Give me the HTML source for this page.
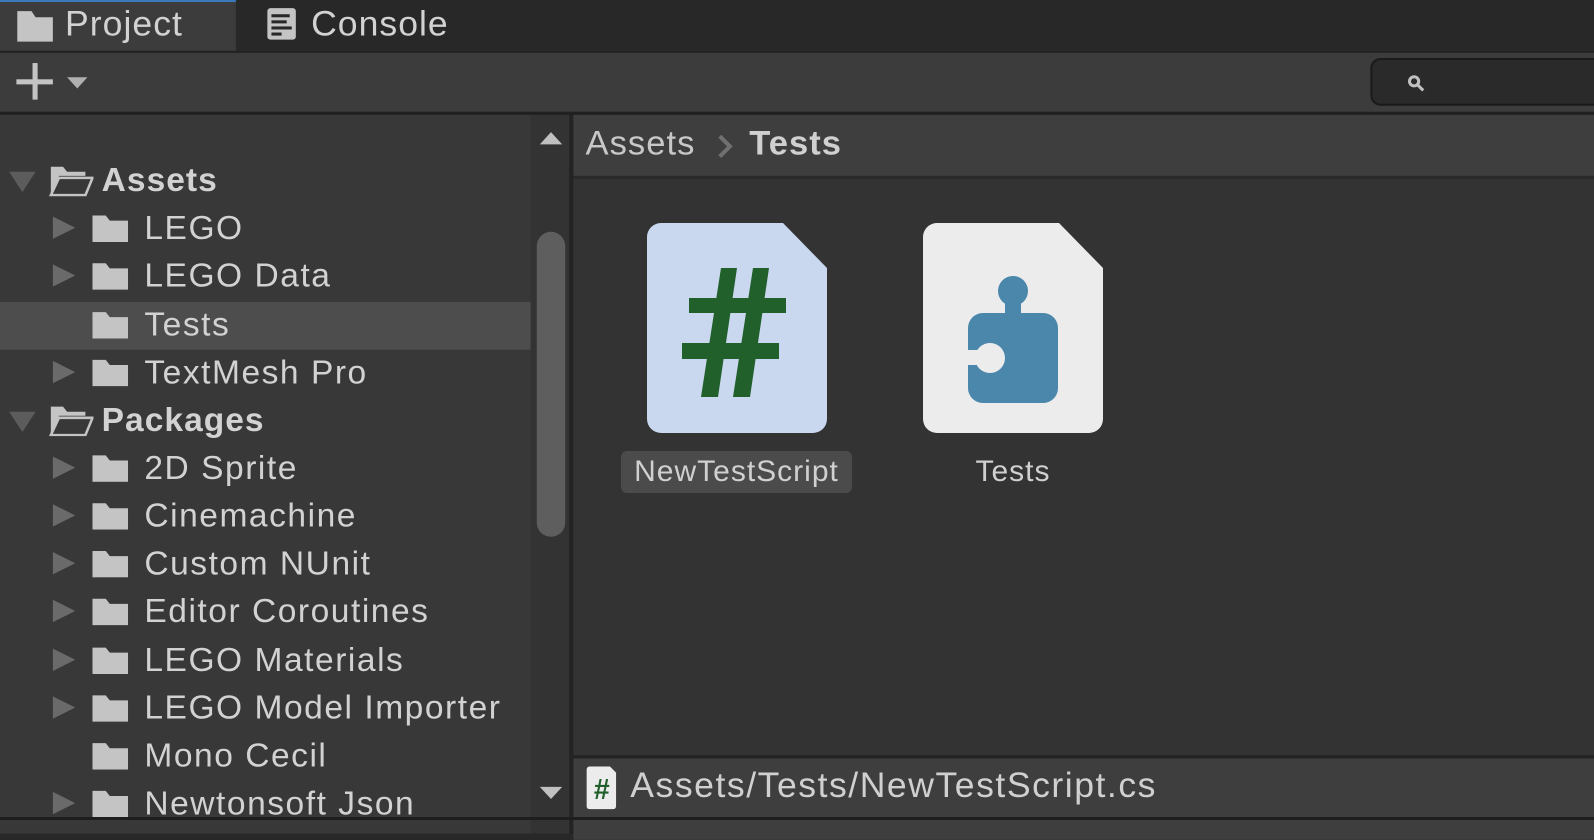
<!DOCTYPE html>
<html><head><style>
*{margin:0;padding:0;box-sizing:border-box}
body{width:1594px;height:820px;background:#282828;font-family:"Liberation Sans",sans-serif;color:#d2d2d2;position:relative;overflow:hidden}
#w{position:absolute;left:0;top:0;width:1568px;height:807px;transform:scale(1.0166);transform-origin:0 0}
.abs{position:absolute}
.row{position:absolute;left:0;width:522px;height:47px;font-size:33px;line-height:47px;letter-spacing:1.5px}
.row .t{position:absolute;left:142px}
.row .tri{position:absolute;left:52px;top:13px;width:0;height:0;border-top:11px solid transparent;border-bottom:11px solid transparent;border-left:22px solid #6a6a6a}
.fold{position:absolute;left:90px;top:11px;width:36px;height:27px}
.b{font-weight:bold}
</style></head><body>
<div id="w">
<div class="abs" style="left:0;top:0;width:232px;height:50px;background:#3c3c3c;border-top:2px solid #3a79bb"></div>
<svg class="abs" style="left:16px;top:10px" width="38" height="32"><path d="M1 1h14l4 6h17v24H1z" fill="#c4c4c4"/></svg>
<div class="abs" style="left:64px;top:4px;font-size:35px;letter-spacing:1px">Project</div>
<svg class="abs" style="left:262px;top:7px" width="30" height="33"><rect x="1" y="1" width="28" height="31" rx="3" fill="#c4c4c4"/><g fill="#282828"><rect x="5" y="7" width="18" height="3"/><rect x="5" y="13" width="15" height="3"/><rect x="5" y="19" width="20" height="3"/><rect x="5" y="25" width="10" height="3"/></g></svg>
<div class="abs" style="left:306px;top:4px;font-size:35px;letter-spacing:1px">Console</div>
<div class="abs" style="left:0;top:50px;width:1594px;height:60px;background:#3c3c3c;border-top:2px solid #222"></div>
<div class="abs" style="left:0;top:110px;width:1594px;height:3px;background:#202020"></div>
<svg class="abs" style="left:16px;top:62px" width="70" height="38"><rect x="0" y="16" width="36" height="5" fill="#c4c4c4"/><rect x="16" y="0" width="5" height="36" fill="#c4c4c4"/><path d="M50 14h20l-10 11z" fill="#b0b0b0"/></svg>
<div class="abs" style="left:1348px;top:57px;width:260px;height:47px;background:#2a2a2a;border:2px solid #1a1a1a;border-radius:10px"></div>
<svg class="abs" style="left:1384px;top:73px" width="22" height="22"><circle cx="7" cy="7" r="4.5" stroke="#c0c0c0" stroke-width="3" fill="none"/><path d="M10 10l6 6" stroke="#c0c0c0" stroke-width="3"/></svg>
<div class="abs" style="left:0;top:113px;width:522px;height:707px;background:#383838"></div>
<div class="abs" style="left:522px;top:113px;width:38px;height:707px;background:#333"></div>
<div class="abs" style="left:560px;top:113px;width:4px;height:707px;background:#232323"></div>
<div class="abs" style="left:528px;top:228px;width:28px;height:300px;background:#5e5e5e;border-radius:14px"></div>
<svg class="abs" style="left:530px;top:128px" width="24" height="16"><path d="M1 14h22L12 2z" fill="#c0c0c0"/></svg>
<svg class="abs" style="left:530px;top:772px" width="24" height="16"><path d="M1 2h22L12 14z" fill="#c0c0c0"/></svg>
<div class="abs" style="left:0;top:297px;width:522px;height:47px;background:#4d4d4d"></div>

<div class="row" style="top:153px"><svg class="abs" style="left:8px;top:14px" width="28" height="22"><path d="M1 2h26L14 22z" fill="#5c5c5c"/></svg><svg class="abs" style="left:48px;top:10px" width="44" height="30"><path d="M2 1h12l4 5h18v4H10L2 28z" fill="#c4c4c4"/><path d="M10 12h33l-7 17H2z" fill="none" stroke="#c4c4c4" stroke-width="2.5"/></svg><span class="t b" style="left:100px;letter-spacing:1px">Assets</span></div>
<div class="row" style="top:200px"><i class="tri"></i><svg class="fold"><path d="M1 1h13l4 5h18v21H1z" fill="#c4c4c4"/></svg><span class="t">LEGO</span></div>
<div class="row" style="top:247px"><i class="tri"></i><svg class="fold"><path d="M1 1h13l4 5h18v21H1z" fill="#c4c4c4"/></svg><span class="t">LEGO Data</span></div>
<div class="row" style="top:295px"><svg class="fold"><path d="M1 1h13l4 5h18v21H1z" fill="#c4c4c4"/></svg><span class="t">Tests</span></div>
<div class="row" style="top:342px"><i class="tri"></i><svg class="fold"><path d="M1 1h13l4 5h18v21H1z" fill="#c4c4c4"/></svg><span class="t">TextMesh Pro</span></div>
<div class="row" style="top:389px"><svg class="abs" style="left:8px;top:14px" width="28" height="22"><path d="M1 2h26L14 22z" fill="#5c5c5c"/></svg><svg class="abs" style="left:48px;top:10px" width="44" height="30"><path d="M2 1h12l4 5h18v4H10L2 28z" fill="#c4c4c4"/><path d="M10 12h33l-7 17H2z" fill="none" stroke="#c4c4c4" stroke-width="2.5"/></svg><span class="t b" style="left:100px;letter-spacing:1px">Packages</span></div>
<div class="row" style="top:436px"><i class="tri"></i><svg class="fold"><path d="M1 1h13l4 5h18v21H1z" fill="#c4c4c4"/></svg><span class="t">2D Sprite</span></div>
<div class="row" style="top:483px"><i class="tri"></i><svg class="fold"><path d="M1 1h13l4 5h18v21H1z" fill="#c4c4c4"/></svg><span class="t">Cinemachine</span></div>
<div class="row" style="top:530px"><i class="tri"></i><svg class="fold"><path d="M1 1h13l4 5h18v21H1z" fill="#c4c4c4"/></svg><span class="t">Custom NUnit</span></div>
<div class="row" style="top:577px"><i class="tri"></i><svg class="fold"><path d="M1 1h13l4 5h18v21H1z" fill="#c4c4c4"/></svg><span class="t">Editor Coroutines</span></div>
<div class="row" style="top:625px"><i class="tri"></i><svg class="fold"><path d="M1 1h13l4 5h18v21H1z" fill="#c4c4c4"/></svg><span class="t">LEGO Materials</span></div>
<div class="row" style="top:672px"><i class="tri"></i><svg class="fold"><path d="M1 1h13l4 5h18v21H1z" fill="#c4c4c4"/></svg><span class="t">LEGO Model Importer</span></div>
<div class="row" style="top:719px"><svg class="fold"><path d="M1 1h13l4 5h18v21H1z" fill="#c4c4c4"/></svg><span class="t">Mono Cecil</span></div>
<div class="row" style="top:766px"><i class="tri"></i><svg class="fold"><path d="M1 1h13l4 5h18v21H1z" fill="#c4c4c4"/></svg><span class="t">Newtonsoft Json</span></div>

<div class="abs" style="left:564px;top:113px;width:1030px;height:60px;background:#3e3e3e"></div>
<div class="abs" style="left:564px;top:173px;width:1030px;height:3px;background:#2a2a2a"></div>
<div class="abs" style="left:564px;top:176px;width:1030px;height:567px;background:#333"></div>
<div class="abs" style="left:576px;top:122px;font-size:34px;letter-spacing:1px;color:#c8c8c8">Assets</div>
<svg class="abs" style="left:704px;top:131px" width="18" height="26"><path d="M4 3l10 10L4 23" stroke="#707070" stroke-width="4" fill="none"/></svg>
<div class="abs b" style="left:737px;top:122px;font-size:34px;letter-spacing:1px;color:#d0d0d0">Tests</div>

<div class="abs" style="left:564px;top:743px;width:1030px;height:3px;background:#232323"></div>
<div class="abs" style="left:564px;top:746px;width:1030px;height:80px;background:#3e3e3e"></div>
<svg class="abs" style="left:577px;top:754px" width="30" height="42"><path d="M3 0h20l6 6v33a3 3 0 0 1-3 3H3a3 3 0 0 1-3-3V3a3 3 0 0 1 3-3z" fill="#ececec"/><text x="15" y="32" text-anchor="middle" font-family="Liberation Sans" font-weight="bold" font-size="28" fill="#215f2b">#</text></svg>
<div class="abs" style="left:620px;top:753px;font-size:35px;letter-spacing:1.5px;color:#d0d0d0">Assets/Tests/NewTestScript.cs</div>
</div>
<div class="abs" style="left:0;top:817px;width:1594px;height:3px;background:#1e1e1e"></div>

<svg class="abs" style="left:647px;top:223px" width="180" height="210"><path d="M14 0h122l44 45v151a14 14 0 0 1-14 14H14A14 14 0 0 1 0 196V14A14 14 0 0 1 14 0z" fill="#c9d7ef"/>
<g fill="#215f2b"><path d="M74 45h16l-19 129H54z"/><path d="M106 45h16l-19 129H86z"/><rect x="42" y="75" width="97" height="15"/><rect x="35" y="120" width="97" height="16"/></g></svg>
<svg class="abs" style="left:923px;top:223px" width="180" height="210"><path d="M14 0h122l44 45v151a14 14 0 0 1-14 14H14A14 14 0 0 1 0 196V14A14 14 0 0 1 14 0z" fill="#ececec"/>
<g fill="#4a87ab"><circle cx="90" cy="68" r="15"/><rect x="82" y="70" width="16" height="25"/><rect x="45" y="90" width="90" height="90" rx="15"/></g>
<rect x="40" y="127" width="25" height="15" fill="#ececec"/><circle cx="67" cy="135" r="15" fill="#ececec"/></svg>
<div class="abs" style="left:621px;top:451px;width:231px;height:42px;background:#4b4b4b;border-radius:6px"></div>
<div class="abs" style="left:621px;top:455px;width:231px;text-align:center;font-size:30px;letter-spacing:1px;color:#d0d0d0">NewTestScript</div>
<div class="abs" style="left:923px;top:455px;width:180px;text-align:center;font-size:30px;letter-spacing:1px;color:#d0d0d0">Tests</div>
</body></html>
